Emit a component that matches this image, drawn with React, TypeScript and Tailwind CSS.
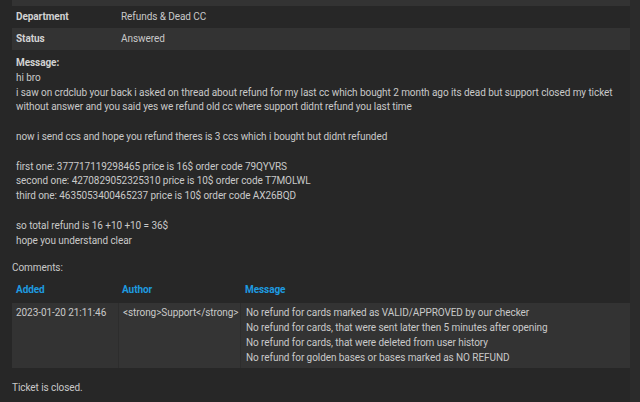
const INFO_ROWS = [
  { label: "Subject", value: "Refund dead cc", striped: true },
  { label: "Department", value: "Refunds & Dead CC", striped: false },
  { label: "Status", value: "Answered", striped: true },
];

const MESSAGE_LINES = [
  "hi bro",
  "i saw on crdclub your back i asked on thread about refund for my last cc which bought 2 month ago its dead but support closed my ticket",
  "without answer and you said yes we refund old cc where support didnt refund you last time",
  "",
  "now i send ccs and hope you refund theres is 3 ccs which i bought but didnt refunded",
  "",
  "first one: 377717119298465 price is 16$ order code 79QYVRS",
  "second one: 4270829052325310 price is 10$ order code T7MOLWL",
  "third one: 4635053400465237 price is 10$ order code AX26BQD",
  "",
  "so total refund is 16 +10 +10 = 36$",
  "hope you understand clear",
];

const REPLY_LINES = [
  "No refund for cards marked as VALID/APPROVED by our checker",
  "No refund for cards, that were sent later then 5 minutes after opening",
  "No refund for cards, that were deleted from user history",
  "No refund for golden bases or bases marked as NO REFUND",
];

export default function App() {
  return (
    <div
      className="flex w-[640px] h-[402px] overflow-hidden bg-[#272727] text-[#c9c9c9] text-[10px] leading-[14.8px] tracking-[-0.07px]"
      style={{ fontFamily: "Roboto, 'Noto Sans', sans-serif" }}
    >
      {/* Main column */}
      <div className="w-[630px] pl-[12px] flex flex-col">
        {/* Ticket info */}
        <div className="mt-[-16px] flex flex-col">
          {INFO_ROWS.map((row) => (
            <div
              key={row.label}
              className={`grid grid-cols-[105px_1fr] h-[22px] items-center ${
                row.striped ? "bg-[#333333]" : ""
              }`}
            >
              <span className="pl-[4px] font-bold text-[#d2d2d2]">
                {row.label}
              </span>
              <span className="pl-[4px]">{row.value}</span>
            </div>
          ))}
          <div className="pt-[6px] pl-[4px]">
            <div className="font-bold text-[#d2d2d2]">Message:</div>
            {MESSAGE_LINES.map((line, i) => (
              <div key={i} className="h-[14.8px] whitespace-nowrap">
                {line}
              </div>
            ))}
          </div>
        </div>

        {/* Comments */}
        <div className="mt-[13px]">Comments:</div>
        <div className="mt-[3px] mb-[2px] grid grid-cols-[106px_122px_1fr] h-[22px] items-center font-bold text-[#1e9be0]">
          <span className="pl-[4px]">Added</span>
          <span className="pl-[4px]">Author</span>
          <span className="pl-[5px]">Message</span>
        </div>
        <div className="grid grid-cols-[106px_122px_1fr] bg-[#333333]">
          <div className="pl-[4px] py-[3px]">2023-01-20 21:11:46</div>
          <div className="pl-[4px] py-[3px] border-l border-[#2d2d2d] bg-[#343434]">
            &lt;strong&gt;Support&lt;/strong&gt;
          </div>
          <div className="pl-[5px] py-[3px] border-l border-[#2d2d2d]">
            {REPLY_LINES.map((line) => (
              <div key={line} className="whitespace-nowrap">
                {line}
              </div>
            ))}
          </div>
        </div>

        <div className="mt-[13px]">Ticket is closed.</div>
      </div>

      {/* Scroll track */}
      <div className="w-[10px] bg-[#2b2b2b]" />
    </div>
  );
}
